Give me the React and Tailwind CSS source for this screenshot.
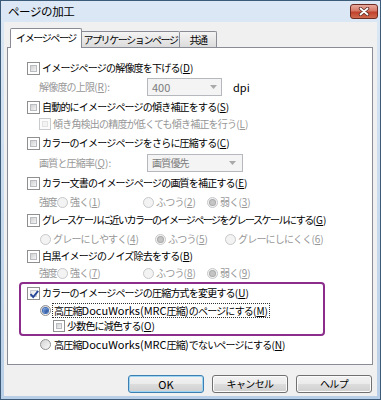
import React from 'react';

const FONT = "font-['Noto_Sans_CJK_JP','Noto_Sans',sans-serif]";

// accelerator key in parentheses, e.g. (D)
function A({ k }) {
  return (
    <span className="tracking-normal">
      (<span className="underline underline-offset-[1px]">{k}</span>)
    </span>
  );
}

function Lat({ children }) {
  return <span className="text-[11px] tracking-normal">{children}</span>;
}

function CheckBox({ checked, disabled, small }) {
  return (
    <span
      className={`relative shrink-0 flex p-[2px] border ${small ? 'w-[12px] h-[12px]' : 'w-[13px] h-[13px]'} ${
        disabled ? 'border-[#c8cacc] bg-[#fbfbfb]' : 'border-[#8f8f8f] bg-white'
      }`}
    >
      <span
        className={`flex-1 border ${
          disabled
            ? 'border-[#e2e2e2] bg-[#f3f3f3]'
            : checked
            ? 'border-[#c9ced4] bg-gradient-to-br from-[#e4e4e4] to-[#fbfbfb]'
            : 'border-[#b9bdc1] bg-gradient-to-br from-[#d2d2d2] to-[#f4f4f4]'
        }`}
      />
      {checked && (
        <svg className="absolute inset-0" width="13" height="13" viewBox="0 0 13 13">
          <path d="M2.5 6.2 L5.2 9 L10.2 2.8" stroke="#26479a" strokeWidth="1.9" fill="none" />
        </svg>
      )}
    </span>
  );
}

function Radio({ selected, disabled }) {
  return (
    <span
      className={`shrink-0 w-[11px] h-[11px] rounded-full border flex items-center justify-center ${
        disabled
          ? 'border-[#c6c8ca] bg-[#f3f3f3]'
          : 'border-[#8f8f8f] bg-gradient-to-br from-[#d4d4d4] to-[#fafafa]'
      }`}
    >
      {selected && (
        <span
          className={`w-[5px] h-[5px] rounded-full ${
            disabled
              ? 'bg-[#c4c4c4] ring-1 ring-[#a9a9a9]'
              : 'bg-gradient-to-br from-[#86b3ee] to-[#163a8a] ring-1 ring-[#3d6bb5]'
          }`}
        />
      )}
    </span>
  );
}

function Combo({ width, children, arrowPad }) {
  return (
    <div
      className={`${width} h-[18px] shrink-0 border border-[#b5b8bc] bg-[#f4f4f4] flex items-center pl-[4px] ${arrowPad} text-[#7b7b7b]`}
    >
      <span>{children}</span>
      <svg className="ml-auto" width="7" height="4" viewBox="0 0 7 4">
        <path d="M0 0h7L3.5 4z" fill="#a9a9a9" />
      </svg>
    </div>
  );
}

function Btn({ children, def }) {
  return (
    <div
      className={`w-[76px] h-[18px] rounded-[3px] border flex items-center justify-center text-black bg-[linear-gradient(#f2f2f2_0%,#ebebeb_50%,#dddddd_50%,#cfcfcf_100%)] ${
        def ? 'border-[#3c7fb1] shadow-[inset_0_0_0_1px_#9fd5f3]' : 'border-[#707070] shadow-[inset_0_0_0_1px_#fbfbfb]'
      }`}
    >
      {children}
    </div>
  );
}

const GRAY = 'text-[#979797]';

function Strength({ a, b, c }) {
  return (
    <div className={`flex items-center h-4 ml-[12px] ${GRAY}`}>
      <span className="w-[18px] tracking-[-1.6px]">強度</span>
      <span className="w-[86px] flex items-center">
        <Radio disabled />
        <span className="ml-[2px]">強く<A k={a} /></span>
      </span>
      <span className="w-[64px] flex items-center">
        <Radio disabled />
        <span className="ml-[2px]">ふつう<A k={b} /></span>
      </span>
      <span className="flex items-center">
        <Radio disabled selected />
        <span className="ml-[2px]">弱く<A k={c} /></span>
      </span>
    </div>
  );
}

export default function App() {
  return (
    <div
      className={`w-[381px] h-[400px] flex flex-col border border-[#3b5b78] bg-gradient-to-b from-[#dce8f5] via-[#c9dbee] to-[#b9cfe7] ${FONT} text-[10px] tracking-[-0.8px] leading-none text-black whitespace-nowrap`}
    >
      {/* Title bar */}
      <div className="h-[21px] shrink-0 flex items-center pl-[7px] pr-[2px]">
        <span className="text-[11.5px] tracking-[-0.4px]">ページの加工</span>
        <div className="ml-auto w-[28px] h-[15px] rounded-[3px] border border-[#6e2b22] bg-[linear-gradient(#e8aa9e_0%,#d67866_45%,#c2412c_55%,#cf6a4f_100%)] flex items-center justify-center">
          <svg width="12" height="9" viewBox="0 0 12 9">
            <path d="M2.5 1.5 L9.5 7.5 M9.5 1.5 L2.5 7.5" stroke="#5a2a26" strokeWidth="3.4" strokeLinecap="round" />
            <path d="M2.5 1.5 L9.5 7.5 M9.5 1.5 L2.5 7.5" stroke="#ffffff" strokeWidth="1.8" strokeLinecap="round" />
          </svg>
        </div>
      </div>

      {/* Client area */}
      <div className="flex-1 mx-[3px] mb-[3px] bg-[#f0f0f0] flex flex-col">
        {/* Tabs */}
        <div className="flex items-end pt-[6px] pl-[6px] tracking-[-1.4px]">
          <div className="relative z-10 -mb-px w-[72px] h-[20px] border border-b-0 border-[#898c95] rounded-t-[2px] bg-white flex items-center justify-center pb-[2px]">
            イメージページ
          </div>
          <div className="w-[98px] h-[16px] border border-l-0 border-b-0 border-[#898c95] rounded-tr-[2px] bg-gradient-to-b from-[#f4f4f4] to-[#dcdcdc] flex items-center justify-center">
            アプリケーションページ
          </div>
          <div className="w-[37px] h-[16px] border border-l-0 border-b-0 border-[#898c95] rounded-tr-[2px] bg-gradient-to-b from-[#f4f4f4] to-[#dcdcdc] flex items-center justify-center">
            共通
          </div>
        </div>

        {/* Tab panel */}
        <div className="ml-[3px] w-[366px] h-[318px] border border-[#898c95] bg-white pt-[12px] pl-[19px] flex flex-col">
          <div className="flex items-center h-4">
            <CheckBox />
            <span className="ml-[2px]">イメージページの解像度を下げる<A k="D" /></span>
          </div>

          <div className={`flex items-center h-4 mt-[3px] ml-[12px] ${GRAY}`}>
            <span className="w-[108px]">解像度の上限<A k="R" />:</span>
            <Combo width="w-[75px]" arrowPad="pr-[4px]"><Lat>400</Lat></Combo>
            <span className="ml-[11px] text-black"><Lat>dpi</Lat></span>
          </div>

          <div className="flex items-center h-4 mt-[4px]">
            <CheckBox />
            <span className="ml-[2px]">自動的にイメージページの傾き補正をする<A k="S" /></span>
          </div>

          <div className={`flex items-center h-4 mt-[1px] ml-[12px] ${GRAY}`}>
            <CheckBox disabled small />
            <span className="ml-[2px]">傾き角検出の精度が低くても傾き補正を行う<A k="L" /></span>
          </div>

          <div className="flex items-center h-4 mt-[3px]">
            <CheckBox />
            <span className="ml-[2px]">カラーのイメージページをさらに圧縮する<A k="C" /></span>
          </div>

          <div className={`flex items-center h-4 mt-[4px] ml-[12px] ${GRAY}`}>
            <span className="w-[108px]">画質と圧縮率<A k="Q" />:</span>
            <Combo width="w-[96px]" arrowPad="pr-[6px]">画質優先</Combo>
          </div>

          <div className="flex items-center h-4 mt-[4px]">
            <CheckBox />
            <span className="ml-[2px]">カラー文書のイメージページの画質を補正する<A k="E" /></span>
          </div>

          <div className="mt-[3px]">
            <Strength a="1" b="2" c="3" />
          </div>

          <div className="flex items-center h-4 mt-[2px]">
            <CheckBox />
            <span className="ml-[2px] tracking-[-1.5px]">
              グレースケールに近いカラーのイメージページをグレースケールにする<A k="G" />
            </span>
          </div>

          <div className={`flex items-center h-4 mt-[3px] ml-[13px] ${GRAY}`}>
            <span className="w-[115px] flex items-center">
              <Radio disabled />
              <span className="ml-[2px]">グレーにしやすく<A k="4" /></span>
            </span>
            <span className="w-[70px] flex items-center">
              <Radio disabled selected />
              <span className="ml-[2px]">ふつう<A k="5" /></span>
            </span>
            <span className="flex items-center">
              <Radio disabled />
              <span className="ml-[2px]">グレーにしにくく<A k="6" /></span>
            </span>
          </div>

          <div className="flex items-center h-4 mt-[1px]">
            <CheckBox />
            <span className="ml-[2px]">白黒イメージのノイズ除去をする<A k="B" /></span>
          </div>

          <div className="mt-[1px]">
            <Strength a="7" b="8" c="9" />
          </div>

          {/* highlighted group */}
          <div className="mt-[1px] -ml-[8px] w-[306px] border-2 border-[#8c2d8c] rounded-[4px] pl-[6px] pt-[1px] flex flex-col">
            <div className="flex items-center h-4">
              <CheckBox checked />
              <span className="ml-[2px]">カラーのイメージページの圧縮方式を変更する<A k="U" /></span>
            </div>
            <div className="flex items-center h-4 mt-[1px] ml-[13px]">
              <Radio selected />
              <span className="ml-[2px] px-[1px] py-[1px] outline-1 outline-dotted outline-[#333]">
                高圧縮<Lat>DocuWorks(MRC</Lat>圧縮<Lat>)</Lat>のページにする<A k="M" />
              </span>
            </div>
            <div className="flex items-center h-4 ml-[26px]">
              <CheckBox small />
              <span className="ml-[2px]">少数色に減色する<A k="O" /></span>
            </div>
          </div>

          <div className="flex items-center h-4 ml-[13px]">
            <Radio />
            <span className="ml-[3px]">
              高圧縮<Lat>DocuWorks(MRC</Lat>圧縮<Lat>)</Lat>でないページにする<A k="N" />
            </span>
          </div>
        </div>

        {/* Buttons */}
        <div className="mt-[10px] flex justify-end gap-[8px] pr-[5px] tracking-[-0.6px]">
          <Btn def><Lat>OK</Lat></Btn>
          <Btn>キャンセル</Btn>
          <Btn>ヘルプ</Btn>
        </div>
      </div>
    </div>
  );
}
